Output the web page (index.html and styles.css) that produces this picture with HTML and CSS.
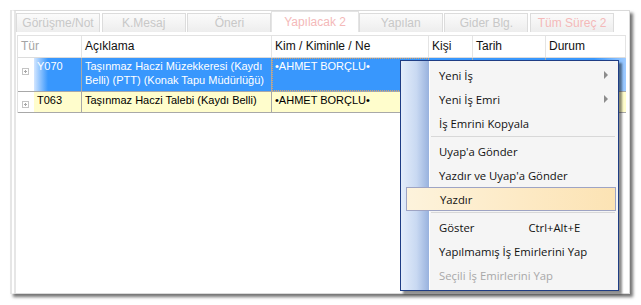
FILE: index.html
```html
<!DOCTYPE html>
<html lang="tr">
<head>
    <meta charset="UTF-8">
    <title>İş Emirleri</title>
    <link rel="stylesheet" href="styles.css">
</head>
<body>

    <div class="window">
        <div class="tabs">
            <div class="tab">Görüşme/Not</div>
            <div class="tab">K.Mesaj</div>
            <div class="tab">Öneri</div>
            <div class="tab active alert">Yapılacak 2</div>
            <div class="tab">Yapılan</div>
            <div class="tab">Gider Blg.</div>
            <div class="tab alert">Tüm Süreç 2</div>
        </div>

        <div class="grid">
            <div class="row head">
                <div class="cell muted">Tür</div>
                <div class="cell">Açıklama</div>
                <div class="cell">Kim / Kiminle / Ne</div>
                <div class="cell">Kişi</div>
                <div class="cell">Tarih</div>
                <div class="cell">Durum</div>
            </div>

            <div class="row selected">
                <div class="cell type">
                    <span class="expander"><svg width="7" height="7" viewBox="0 0 7 7"><rect x="0.5" y="0.5" width="6" height="6" fill="#fff" stroke="#c4c4c4"/><path d="M2 3.5h3M3.5 2v3" stroke="#a8a8a8"/></svg></span>
                    <span class="code">Y070</span>
                </div>
                <div class="cell">Taşınmaz Haczi Müzekkeresi (Kaydı Belli) (PTT) (Konak Tapu Müdürlüğü)</div>
                <div class="cell focus">•AHMET BORÇLU•</div>
                <div class="cell"></div>
                <div class="cell"></div>
                <div class="cell last"></div>
            </div>

            <div class="row pending">
                <div class="cell type">
                    <span class="expander"><svg width="7" height="7" viewBox="0 0 7 7"><rect x="0.5" y="0.5" width="6" height="6" fill="#fff" stroke="#c4c4c4"/><path d="M2 3.5h3M3.5 2v3" stroke="#a8a8a8"/></svg></span>
                    <span class="code">T063</span>
                </div>
                <div class="cell">Taşınmaz Haczi Talebi (Kaydı Belli)</div>
                <div class="cell">•AHMET BORÇLU•</div>
                <div class="cell"></div>
                <div class="cell"></div>
                <div class="cell last"></div>
            </div>
        </div>
    </div>

    <!-- context menu over the grid -->
    <div class="menu">
        <div class="menu-item">Yeni İş <span class="arrow"></span></div>
        <div class="menu-item">Yeni İş Emri <span class="arrow"></span></div>
        <div class="menu-item">İş Emrini Kopyala</div>
        <div class="menu-sep"></div>
        <div class="menu-item">Uyap'a Gönder</div>
        <div class="menu-item">Yazdır ve Uyap'a Gönder</div>
        <div class="menu-item hover">Yazdır</div>
        <div class="menu-sep"></div>
        <div class="menu-item">Göster <span class="shortcut">Ctrl+Alt+E</span></div>
        <div class="menu-item">Yapılmamış İş Emirlerini Yap</div>
        <div class="menu-item disabled">Seçili İş Emirlerini Yap</div>
    </div>

</body>
</html>
```

FILE: styles.css
```css
/* Page */
body {
    margin: 0;
    background: #fff;
    font-family: 'Liberation Sans', Arial, sans-serif;
    position: relative;
    height: 305px;
    overflow: hidden;
}

/* Window frame */
.window {
    box-sizing: border-box;
    margin: 10px 0 0 10px;
    width: 620px;
    height: 284px;
    border: 1px solid #dadada;
    border-left: 6px double #e6e6e6;
    background: #fff;
    box-shadow: 3px 3px 3px rgba(0, 0, 0, 0.55);
}

/* Tabs */
.tabs {
    display: flex;
    align-items: flex-end;
    gap: 1.7px;
    height: 21px;
}

.tab {
    box-sizing: border-box;
    width: 84px;
    height: 19px;
    border: 1px solid #dcdcdc;
    border-bottom: none;
    background: linear-gradient(#fbfbfb, #ededed);
    color: #c8c8c8;
    font-size: 12px;
    line-height: 18px;
    text-align: center;
}

.tab.active {
    width: 88px;
    height: 21px;
    margin: 0 -2px;
    background: #fff;
    border-color: #e4e4e4;
    line-height: 20px;
}

.tab.alert {
    color: #f4b9b9;
}

/* Grid */
.grid {
    box-sizing: border-box;
    width: 609px;
    margin: 3px 0 0 1px;
    border-top: 1px solid #e2e2e2;
    border-left: 1px solid #e2e2e2;
    font-size: 11px;
}

.row {
    display: grid;
    grid-template-columns: 64px 190px 157px 44px 73px 80px;
    border-bottom: 1px solid #a8a8a8;
}

.cell {
    box-sizing: border-box;
    padding: 2px 3px;
    border-right: 1px solid #a8a8a8;
    line-height: 13.5px;
}

.cell.last {
    border-right: none;
}

/* Header row */
.row.head {
    height: 21px;
    border-bottom: 1px solid #dcdcdc;
    background: #fff;
    font-size: 12px;
}

.row.head .cell {
    line-height: 17px;
    color: #111;
    border-right: 1px solid #e4e4e4;
}

.row.head .cell.muted {
    color: #a4a4a4;
}

/* Body rows */
.row.selected {
    height: 33px;
    color: #fff;
    background: #3897fd;
}

.row.pending {
    height: 20px;
    color: #000;
    background: #fffdcc;
}

.cell.type {
    display: flex;
    padding: 0;
    background: #fff;
}

.expander {
    width: 16px;
    padding-top: 7px;
    padding-left: 4px;
    box-sizing: border-box;
    flex-shrink: 0;
}

.row.pending .expander {
    padding-top: 6px;
}

.code {
    flex: 1;
    padding: 2px 3px;
}

.row.selected .code {
    background: linear-gradient(to right, #d3e6ff, #3897fd 14px);
}

.row.pending .code {
    background: #fffdcc;
}

.cell.focus {
    outline: 1px dotted #d5a16a;
    outline-offset: -1px;
}

.row.selected .cell.last {
    background: linear-gradient(to right, #3897fd 60%, #9fcbff);
}

/* Context menu */
.menu {
    position: absolute;
    left: 400px;
    top: 60px;
    box-sizing: border-box;
    width: 219px;
    height: 231px;
    padding: 2px 1px;
    border: 1px solid #1f3d84;
    background:
        linear-gradient(#fff, #fff) no-repeat 28px 0 / 1px 100%,
        linear-gradient(to right, #e4edfa, #c9d9f2 55%, #98b2de) no-repeat 0 0 / 28px 100%,
        #f5f5f5;
    box-shadow: 3px 3px 2px rgba(0, 0, 0, 0.45);
    font-family: 'Open Sans', 'Noto Sans', sans-serif;
    font-size: 11.3px;
    color: #111;
}

.menu-item {
    box-sizing: border-box;
    display: flex;
    align-items: center;
    height: 24px;
    margin: 0 1px 0 4px;
    padding-left: 33px;
    position: relative;
}

.menu-item.hover {
    border: 1px solid #9ea4c4;
    background: linear-gradient(to right, #fdf3dc, #fde9c3 60%, #fce3b4);
}

.menu-item.disabled {
    color: #a8a8a8;
}

.menu-sep {
    box-sizing: border-box;
    height: 4px;
    margin: 1px 2px -1px 29px;
    border-top: 1px solid #d8d8d8;
}

.shortcut {
    margin-left: 54px;
}

.arrow {
    position: absolute;
    right: 8px;
    top: 8px;
    width: 0;
    height: 0;
    border-top: 4px solid transparent;
    border-bottom: 4px solid transparent;
    border-left: 4px solid #8c8c8c;
}
```
